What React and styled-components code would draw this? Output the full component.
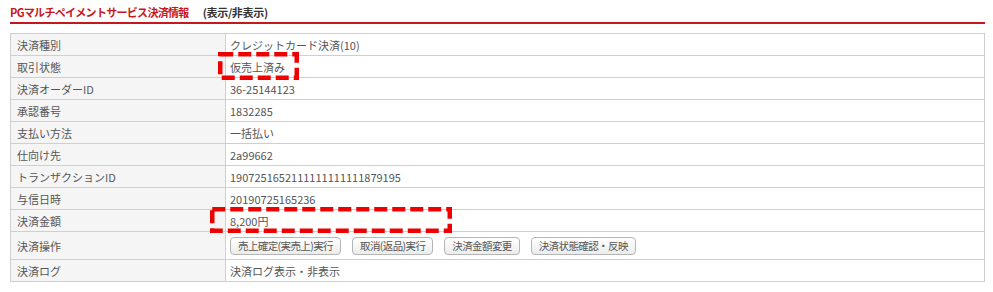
import React from "react";
import styled, { createGlobalStyle } from "styled-components";

const GlobalStyle = createGlobalStyle`
  html, body {
    margin: 0;
    padding: 0;
    background: #fff;
  }
  body {
    font-family: "Noto Sans CJK JP", "Noto Sans", sans-serif;
    color: #333;
  }
`;

const rows = [
  { label: "決済種別", value: "クレジットカード決済(10)" },
  { label: "取引状態", value: "仮売上済み" },
  { label: "決済オーダーID", value: "36-25144123" },
  { label: "承認番号", value: "1832285" },
  { label: "支払い方法", value: "一括払い" },
  { label: "仕向け先", value: "2a99662" },
  { label: "トランザクションID", value: "1907251652111111111111879195" },
  { label: "与信日時", value: "20190725165236" },
  { label: "決済金額", value: "8,200円" },
  { label: "決済操作", buttons: ["売上確定(実売上)実行", "取消(返品)実行", "決済金額変更", "決済状態確認・反映"] },
  { label: "決済ログ", value: "決済ログ表示・非表示" },
];

// annotation boxes drawn on top of the screenshot
const marks = [
  { left: 218, top: 52, width: 81, height: 28 },
  { left: 210, top: 207, width: 242, height: 26 },
];

export default function App() {
  return (
    <Page>
      <GlobalStyle />
      <Heading>
        <Title>PGマルチペイメントサービス決済情報</Title>
        <Toggle>(表示/非表示)</Toggle>
      </Heading>

      <InfoTable>
        <tbody>
          {rows.map((row) => (
            <tr key={row.label}>
              <Label>{row.label}</Label>
              <Value $tall={!!row.buttons}>
                {row.buttons ? (
                  <ButtonRow>
                    {row.buttons.map((b) => (
                      <ActionButton key={b}>{b}</ActionButton>
                    ))}
                  </ButtonRow>
                ) : (
                  row.value
                )}
              </Value>
            </tr>
          ))}
        </tbody>
      </InfoTable>

      {marks.map((m, i) => (
        <Mark key={i} style={{ left: m.left, top: m.top }} width={m.width} height={m.height}>
          <rect
            x="2.25"
            y="2.25"
            width={m.width - 4.5}
            height={m.height - 4.5}
            fill="none"
            stroke="#ee0000"
            strokeWidth="4.5"
            strokeDasharray="13 5"
          />
        </Mark>
      ))}
    </Page>
  );
}

const Page = styled.div`
  position: relative;
  width: 993px;
  height: 292px;
  padding: 0 8px 0 10px;
  box-sizing: border-box;
`;

const Heading = styled.div`
  width: 975px;
  display: flex;
  align-items: center;
  gap: 14px;
  height: 24px;
  padding-top: 1px;
  box-sizing: border-box;
  border-bottom: 2px solid #c8161d;
  font-size: 11px;
  font-weight: bold;
`;

const Title = styled.span`
  color: #c8161d;
  letter-spacing: -0.7px;
`;

const Toggle = styled.span`
  color: #333;
  letter-spacing: -0.3px;
`;

const InfoTable = styled.table`
  margin-top: 9px;
  width: 975px;
  border-collapse: collapse;
  font-size: 11px;
  table-layout: fixed;
`;

const Label = styled.td`
  width: 215px;
  box-sizing: border-box;
  height: 22px;
  padding: 0 6px;
  background: #f5f5f5;
  border: 1px solid #cfcfcf;
  color: #555;
  white-space: nowrap;
`;

const Value = styled.td`
  box-sizing: border-box;
  height: ${(p) => (p.$tall ? "28px" : "22px")};
  padding: 0 4px;
  border: 1px solid #cfcfcf;
  color: #555;
  white-space: nowrap;
`;

const ButtonRow = styled.div`
  display: flex;
  gap: 11px;
  align-items: center;
`;

const ActionButton = styled.button`
  font-family: inherit;
  font-size: 10.5px;
  letter-spacing: -0.6px;
  color: #555;
  height: 18px;
  padding: 0 7px;
  line-height: 16px;
  border: 1px solid #b5b5b5;
  border-radius: 4px;
  background: linear-gradient(#ffffff, #ececec);
  cursor: pointer;
`;

const Mark = styled.svg`
  position: absolute;
  overflow: visible;
`;
